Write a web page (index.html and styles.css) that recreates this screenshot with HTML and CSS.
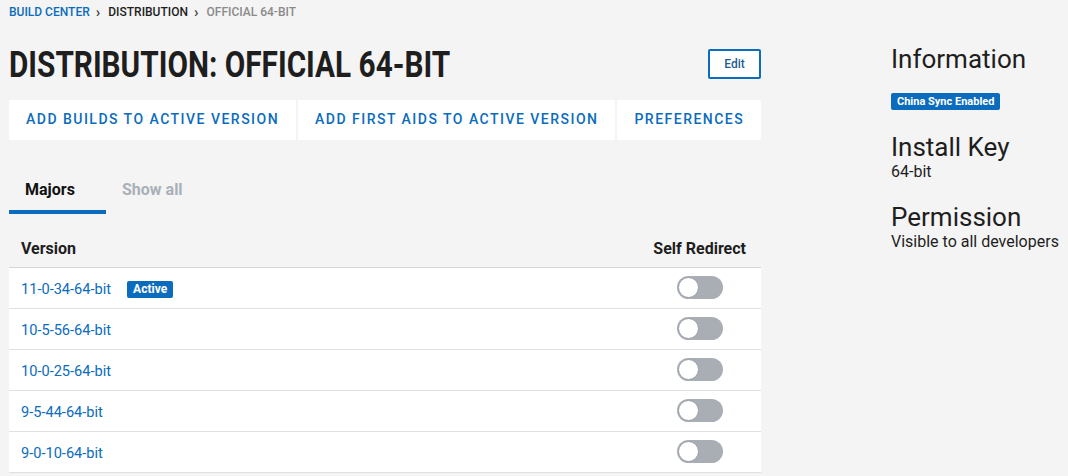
FILE: index.html
```html
<!DOCTYPE html>
<html lang="en">
<head>
<meta charset="utf-8">
<title>Distribution: Official 64-bit</title>
<link rel="stylesheet" href="styles.css">
</head>
<body>
<div class="page">
  <main class="main">
    <nav class="crumbs">
      <a class="crumb crumb-link" href="#">BUILD CENTER</a>
      <span class="sep">›</span>
      <span class="crumb crumb-mid">DISTRIBUTION</span>
      <span class="sep">›</span>
      <span class="crumb crumb-current">OFFICIAL 64-BIT</span>
    </nav>
    <div class="title-row">
      <h1 class="title">DISTRIBUTION: OFFICIAL 64-BIT</h1>
      <button class="edit-btn">Edit</button>
    </div>
    <div class="actions">
      <button class="action">ADD BUILDS TO ACTIVE VERSION</button>
      <button class="action">ADD FIRST AIDS TO ACTIVE VERSION</button>
      <button class="action action-last">PREFERENCES</button>
    </div>
    <div class="tabs">
      <div class="tab tab-active">Majors</div>
      <div class="tab">Show all</div>
    </div>
    <table class="versions">
      <thead>
        <tr><th class="col-version">Version</th><th class="col-redirect">Self Redirect</th></tr>
      </thead>
      <tbody>
        <tr><td class="col-version"><a href="#" class="ver">11-0-34-64-bit</a><span class="badge">Active</span></td><td class="col-toggle"><span class="toggle"><span class="knob"></span></span></td></tr>
        <tr><td class="col-version"><a href="#" class="ver">10-5-56-64-bit</a></td><td class="col-toggle"><span class="toggle"><span class="knob"></span></span></td></tr>
        <tr><td class="col-version"><a href="#" class="ver">10-0-25-64-bit</a></td><td class="col-toggle"><span class="toggle"><span class="knob"></span></span></td></tr>
        <tr><td class="col-version"><a href="#" class="ver">9-5-44-64-bit</a></td><td class="col-toggle"><span class="toggle"><span class="knob"></span></span></td></tr>
        <tr><td class="col-version"><a href="#" class="ver">9-0-10-64-bit</a></td><td class="col-toggle"><span class="toggle"><span class="knob"></span></span></td></tr>
      </tbody>
    </table>
  </main>
  <aside class="side">
    <h2 class="side-h">Information</h2>
    <span class="badge badge-side">China Sync Enabled</span>
    <h2 class="side-h side-h2">Install Key</h2>
    <p class="side-v">64-bit</p>
    <h2 class="side-h side-h3">Permission</h2>
    <p class="side-v">Visible to all developers</p>
  </aside>
</div>
</body>
</html>
```

FILE: styles.css
```css
html, body {
  margin: 0;
  padding: 0;
  background: #f4f4f4;
  font-family: Roboto, "Liberation Sans", sans-serif;
  color: #222;
}
.page {
  display: flex;
  padding-left: 9px;
}
.main {
  width: 752px;
  flex: none;
}
.crumbs {
  display: flex;
  align-items: center;
  padding-top: 5px;
  height: 15px;
  font-size: 12px;
  font-weight: 500;
  line-height: 15px;
}
.crumb { text-decoration: none; }
.crumb-link { color: #0b6cbd; }
.crumb-mid { color: #1e1e1e; }
.crumb-current { color: #8a8a8a; }
.sep {
  margin: 0 8px 0 6px;
  font-size: 15px;
  font-weight: 700;
  color: #444;
  line-height: 15px;
}
.title-row {
  display: flex;
  justify-content: space-between;
  align-items: center;
  margin-top: 24px;
  height: 42px;
}
.title {
  margin: 0;
  font-family: Roboto, "Liberation Sans", sans-serif;
  font-weight: 700;
  font-size: 36px;
  line-height: 42px;
  color: #1e1e1e;
  white-space: nowrap;
  transform: scaleX(0.827);
  transform-origin: left center;
}
.edit-btn {
  width: 53px;
  height: 30px;
  background: #fff;
  border: 2px solid #0b6cbd;
  border-radius: 2px;
  color: #1f5b92;
  font-family: Roboto, sans-serif;
  font-size: 12px;
  font-weight: 500;
  padding: 0;
  margin-top: -2px;
  flex: none;
}
.actions {
  display: flex;
  gap: 2px;
  margin-top: 14px;
}
.action {
  height: 40px;
  background: #fff;
  border: none;
  border-radius: 2px;
  padding: 0 17px 2px;
  font-family: Roboto, sans-serif;
  font-size: 14px;
  font-weight: 500;
  letter-spacing: 1.48px;
  color: #0b6cbd;
  white-space: nowrap;
}
.action-last { flex: 1; min-width: 0; }
.tabs {
  display: flex;
  margin-top: 31px;
}
.tab {
  min-width: 65px;
  padding: 9px 16px 10px;
  font-size: 16px;
  line-height: 20px;
  font-weight: 700;
  color: #a9b0b8;
  border-bottom: 4px solid transparent;
}
.tab-active {
  color: #111;
  border-bottom-color: #0b6cbd;
}
.versions {
  width: 752px;
  margin-top: 16px;
  border-collapse: collapse;
}
.versions th {
  padding: 9px 12px 8px;
  font-size: 16px;
  line-height: 20px;
  font-weight: 700;
  color: #1e1e1e;
  text-align: left;
  border-bottom: 1px solid #d6d6d6;
}
.versions th.col-redirect {
  text-align: right;
  padding-right: 15px;
  width: 93px;
}
.versions td {
  background: #fff;
  height: 40px;
  padding: 0 12px;
  border-bottom: 1px solid #e0e0e0;
  vertical-align: middle;
}
.versions td.col-toggle {
  text-align: center;
  padding-right: 15px;
}
.ver {
  font-size: 14.6px;
  color: #0b6cbd;
  text-decoration: none;
}
.badge {
  display: inline-block;
  margin-left: 16px;
  padding: 0 6px;
  height: 17px;
  line-height: 17px;
  border-radius: 2px;
  background: #0b6cbd;
  color: #fff;
  font-size: 12px;
  font-weight: 700;
  vertical-align: 1px;
}
.toggle {
  display: inline-flex;
  align-items: center;
  width: 46px;
  height: 23px;
  border-radius: 12px;
  background: #a8aeb4;
  vertical-align: middle;
  box-sizing: border-box;
  padding-left: 1px;
  margin-top: -2px;
}
.knob {
  width: 21px;
  height: 21px;
  border-radius: 50%;
  background: #fff;
  box-sizing: border-box;
  border: 1px solid #9aa1a8;
}
.side {
  margin-left: 130px;
  padding-top: 44px;
  display: flex;
  flex-direction: column;
  align-items: flex-start;
}
.side-h {
  margin: 0;
  font-family: Roboto, sans-serif;
  font-weight: 400;
  font-size: 26px;
  line-height: 30px;
  color: #1e1e1e;
}
.badge-side {
  margin: 19px 0 0;
  font-size: 11px;
  padding: 0 6px;
  height: 17px;
  line-height: 17px;
}
.side-h2 { margin-top: 22px; }
.side-h3 { margin-top: 21px; }
.side-v {
  margin: 0;
  padding-top: 1px;
  font-size: 16px;
  line-height: 18px;
  color: #1e1e1e;
}
```
